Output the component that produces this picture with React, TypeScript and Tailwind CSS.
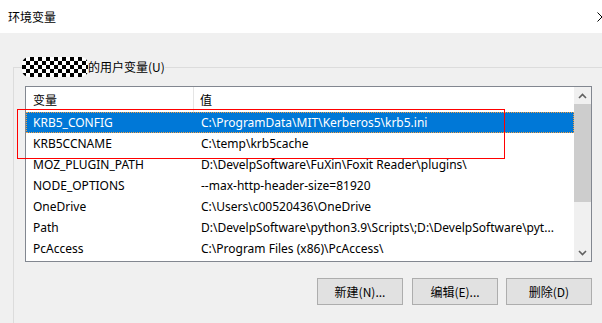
import React from 'react'

const rows = [
  { name: 'KRB5_CONFIG', value: 'C:\\ProgramData\\MIT\\Kerberos5\\krb5.ini' },
  { name: 'KRB5CCNAME', value: 'C:\\temp\\krb5cache' },
  { name: 'MOZ_PLUGIN_PATH', value: 'D:\\DevelpSoftware\\FuXin\\Foxit Reader\\plugins\\' },
  { name: 'NODE_OPTIONS', value: '--max-http-header-size=81920' },
  { name: 'OneDrive', value: 'C:\\Users\\c00520436\\OneDrive' },
  { name: 'Path', value: 'D:\\DevelpSoftware\\python3.9\\Scripts\\;D:\\DevelpSoftware\\pyt...' },
  { name: 'PcAccess', value: 'C:\\Program Files (x86)\\PcAccess\\' },
]

const Checker = () => (
  <svg width="66" height="20" viewBox="0 0 66 20">
    <defs>
      <pattern id="chk" width="8" height="8" patternUnits="userSpaceOnUse">
        <rect width="8" height="8" fill="#fff" />
        <rect width="4" height="4" fill="#000" />
        <rect x="4" y="4" width="4" height="4" fill="#000" />
      </pattern>
    </defs>
    <rect x="0" y="0" width="66" height="20" rx="7" fill="url(#chk)" />
  </svg>
)

const Chevron = ({ up }: { up?: boolean }) => (
  <svg width="9" height="6" viewBox="0 0 9 6">
    <path
      d={up ? 'M1 5 L4.5 1.5 L8 5' : 'M1 1 L4.5 4.5 L8 1'}
      fill="none"
      stroke="#606060"
      strokeWidth="1.6"
    />
  </svg>
)

export default function App() {
  return (
    <div
      className="relative w-[602px] h-[323px] overflow-hidden bg-[#f0f0f0] text-[12px] text-black"
      style={{ fontFamily: '"Noto Sans", "Noto Sans CJK SC", sans-serif' }}
    >
      {/* Title bar */}
      <div className="h-[33px] bg-white flex items-center justify-between pl-[8px]">
        <span style={{ fontFamily: '"Noto Sans CJK SC", sans-serif' }}>环境变量</span>
        <svg width="10" height="10" viewBox="0 0 10 10" className="mr-[-5px]">
          <path d="M0.5 0.5 L9.5 9.5 M9.5 0.5 L0.5 9.5" stroke="#000" strokeWidth="1" />
        </svg>
      </div>

      {/* Group box */}
      <div className="relative mt-[34px] ml-[13px] border-l border-t border-[#dcdcdc] h-[300px] pt-[18px] pl-[11px] pr-[10px]">
        <div className="absolute left-[8px] top-[-11px] flex items-center bg-[#f0f0f0]">
          <Checker />
          <span style={{ fontFamily: '"Noto Sans CJK SC", sans-serif' }}>的用户变量(U)</span>
        </div>

        {/* List view */}
        <div className="flex h-[176px] border border-[#828790] bg-white">
          <div className="flex-1 flex flex-col">
            <div className="flex h-[25px] items-center">
              <div
                className="w-[168px] h-full flex items-center pl-[7px] border-r border-[#e5e5e5]"
                style={{ fontFamily: '"Noto Sans CJK SC", sans-serif' }}
              >
                变量
              </div>
              <div className="pl-[6px]" style={{ fontFamily: '"Noto Sans CJK SC", sans-serif' }}>
                值
              </div>
            </div>
            {rows.map((r, i) => (
              <div
                key={r.name}
                className={
                  i === 0
                    ? 'flex h-[21px] items-center whitespace-nowrap bg-[#0078d7] text-white border border-dotted border-[#f5a040]'
                    : 'flex h-[21px] items-center whitespace-nowrap border border-transparent'
                }
              >
                <div className="w-[167px] pl-[6px]">{r.name}</div>
                <div className="flex-1 pl-[7px] overflow-hidden">{r.value}</div>
              </div>
            ))}
          </div>

          {/* Scrollbar */}
          <div className="w-[17px] bg-[#f0f0f0] flex flex-col">
            <div className="h-[17px] flex items-center justify-center">
              <Chevron up />
            </div>
            <div className="h-[98px] bg-[#cdcdcd]" />
            <div className="flex-1" />
            <div className="h-[17px] flex items-center justify-center">
              <Chevron />
            </div>
          </div>
        </div>

        {/* Buttons */}
        <div
          className="flex justify-end mt-[16px] pr-[0px]"
          style={{ fontFamily: '"Noto Sans CJK SC", sans-serif' }}
        >
          <button className="w-[86px] h-[27px] bg-[#e1e1e1] border border-[#adadad]">新建(N)...</button>
          <button className="w-[86px] h-[27px] ml-[9px] bg-[#e1e1e1] border border-[#adadad]">编辑(E)...</button>
          <button className="w-[86px] h-[27px] ml-[8px] bg-[#e1e1e1] border border-[#adadad]">删除(D)</button>
        </div>
      </div>

      {/* Red annotation box */}
      <div className="absolute left-[17px] top-[109px] w-[488px] h-[50px] border-[1.5px] border-[#ff0000]" />
    </div>
  )
}
